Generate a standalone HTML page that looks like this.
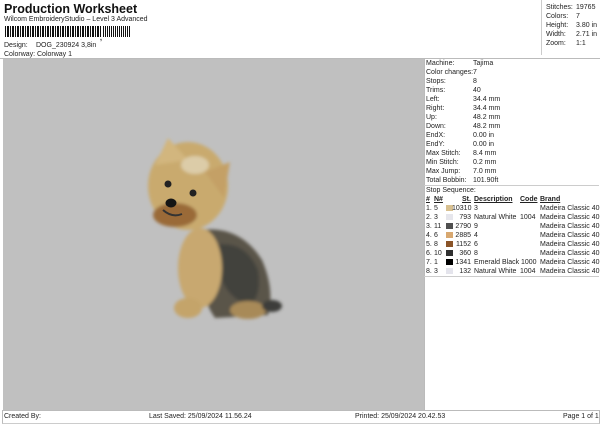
<!DOCTYPE html>
<html><head><style>
*{margin:0;padding:0}
body{width:600px;height:424px;background:#fff;position:relative;overflow:hidden;font-family:"Liberation Sans",sans-serif;font-size:7px;color:#222}
.a{position:absolute;white-space:nowrap;line-height:9px}
.sw{position:absolute;width:7px;height:6px}
</style></head><body>
<div class="a" style="left:4px;top:2px;font-size:12.5px;font-weight:bold;line-height:14px;color:#111">Production Worksheet</div>
<div class="a" style="left:4px;top:15px">Wilcom EmbroideryStudio – Level 3 Advanced</div>
<div class="a" style="left:5px;top:26px;width:96px;height:11px;background:repeating-linear-gradient(90deg,#111 0 1px,#fff 1px 2px,#111 2px 4px,#fff 4px 5px)"></div>
<div class="a" style="left:100px;top:34px;font-weight:bold">,</div>
<div class="a" style="left:103px;top:26px;width:27px;height:11px;background:repeating-linear-gradient(90deg,#111 0 1px,#fff 1px 2px,#111 2px 3px,#fff 3px 4px)"></div>
<div class="a" style="left:4px;top:41px">Design:</div><div class="a" style="left:36px;top:41px">DOG_230924 3,8in</div>
<div class="a" style="left:4px;top:50px">Colorway:</div><div class="a" style="left:37px;top:50px">Colorway 1</div>

<div style="position:absolute;left:541px;top:0;width:59px;height:55px;border-left:1px solid #ccc"></div>
<div class="a" style="left:546px;top:3px">Stitches:</div><div class="a" style="left:576px;top:3px">19765</div>
<div class="a" style="left:546px;top:12px">Colors:</div><div class="a" style="left:576px;top:12px">7</div>
<div class="a" style="left:546px;top:21px">Height:</div><div class="a" style="left:576px;top:21px">3.80 in</div>
<div class="a" style="left:546px;top:30px">Width:</div><div class="a" style="left:576px;top:30px">2.71 in</div>
<div class="a" style="left:546px;top:39px">Zoom:</div><div class="a" style="left:576px;top:39px">1:1</div>

<div style="position:absolute;left:0;top:58px;width:600px;border-top:1px solid #bbb"></div>
<div style="position:absolute;left:3px;top:59px;width:421px;height:351px;background:#c0c0c0"></div>
<div style="position:absolute;left:424px;top:59px;width:175px;height:351px;border-left:1px solid #bbb;border-right:1px solid #ccc"></div>
<div style="position:absolute;left:424px;top:185px;width:175px;border-top:1px solid #ccc"></div>
<div style="position:absolute;left:424px;top:276px;width:175px;border-top:1px solid #ccc"></div>

<svg style="position:absolute;left:0;top:0" width="424" height="410">
<defs><filter id="f"><feGaussianBlur stdDeviation="1.5"/></filter></defs>
<g filter="url(#f)">
<path d="M200 230 Q240 225 262 260 Q275 290 268 315 L215 318 Q195 290 200 230Z" fill="#5a5448"/>
<path d="M215 245 Q245 240 258 270 Q262 295 250 305 Q230 300 222 280Z" fill="#42423c"/>
<ellipse cx="188" cy="186" rx="40" ry="44" fill="#c9aa6e"/>
<path d="M155 165 L168 138 L188 160Z" fill="#d2b67e"/>
<path d="M205 172 L230 162 L224 198Z" fill="#c4a066"/>
<ellipse cx="175" cy="215" rx="22" ry="12" fill="#9a6a38"/>
<ellipse cx="200" cy="268" rx="22" ry="40" fill="#c8a870"/>
<ellipse cx="188" cy="308" rx="14" ry="10" fill="#c4a46a"/>
<ellipse cx="248" cy="310" rx="18" ry="9" fill="#a88a58"/>
<ellipse cx="272" cy="306" rx="10" ry="6" fill="#3e3e3a"/>
<ellipse cx="195" cy="165" rx="14" ry="9" fill="#dccca8"/>
</g>
<circle cx="168" cy="184" r="3.5" fill="#222"/>
<circle cx="193" cy="193" r="3.5" fill="#222"/>
<ellipse cx="171" cy="203" rx="5.5" ry="4.5" fill="#151515"/>
<path d="M163 210 Q172 218 182 214" stroke="#333" stroke-width="2" fill="none"/>
</svg>

<div class="a" style="left:426px;top:59px">Machine:</div><div class="a" style="left:473px;top:59px">Tajima</div>
<div class="a" style="left:426px;top:68px">Color changes:</div><div class="a" style="left:473px;top:68px">7</div>
<div class="a" style="left:426px;top:77px">Stops:</div><div class="a" style="left:473px;top:77px">8</div>
<div class="a" style="left:426px;top:86px">Trims:</div><div class="a" style="left:473px;top:86px">40</div>
<div class="a" style="left:426px;top:95px">Left:</div><div class="a" style="left:473px;top:95px">34.4 mm</div>
<div class="a" style="left:426px;top:104px">Right:</div><div class="a" style="left:473px;top:104px">34.4 mm</div>
<div class="a" style="left:426px;top:113px">Up:</div><div class="a" style="left:473px;top:113px">48.2 mm</div>
<div class="a" style="left:426px;top:122px">Down:</div><div class="a" style="left:473px;top:122px">48.2 mm</div>
<div class="a" style="left:426px;top:131px">EndX:</div><div class="a" style="left:473px;top:131px">0.00 in</div>
<div class="a" style="left:426px;top:140px">EndY:</div><div class="a" style="left:473px;top:140px">0.00 in</div>
<div class="a" style="left:426px;top:149px">Max Stitch:</div><div class="a" style="left:473px;top:149px">8.4 mm</div>
<div class="a" style="left:426px;top:158px">Min Stitch:</div><div class="a" style="left:473px;top:158px">0.2 mm</div>
<div class="a" style="left:426px;top:167px">Max Jump:</div><div class="a" style="left:473px;top:167px">7.0 mm</div>
<div class="a" style="left:426px;top:176px">Total Bobbin:</div><div class="a" style="left:473px;top:176px">101.90ft</div>
<div class="a" style="left:426px;top:186px">Stop Sequence:</div>
<div class="a" style="left:426px;top:195px;font-weight:bold;text-decoration:underline">#</div>
<div class="a" style="left:434px;top:195px;font-weight:bold;text-decoration:underline">N#</div>
<div class="a" style="left:462px;top:195px;font-weight:bold;text-decoration:underline">St.</div>
<div class="a" style="left:474px;top:195px;font-weight:bold;text-decoration:underline">Description</div>
<div class="a" style="left:520px;top:195px;font-weight:bold;text-decoration:underline">Code</div>
<div class="a" style="left:540px;top:195px;font-weight:bold;text-decoration:underline">Brand</div>

<div style="position:absolute;left:0;top:204px">
<div class="a" style="left:426px;top:0">1.</div><div class="a" style="left:434px;top:0">5</div><div class="sw" style="left:446px;top:1px;background:#d8c090"></div><div class="a" style="left:452px;top:0;width:19px;text-align:right">10310</div><div class="a" style="left:474px;top:0">3</div><div class="a" style="left:540px;top:0">Madeira Classic 40</div>
<div class="a" style="left:426px;top:9px">2.</div><div class="a" style="left:434px;top:9px">3</div><div class="sw" style="left:446px;top:10px;background:#e6e6ec"></div><div class="a" style="left:452px;top:9px;width:19px;text-align:right">793</div><div class="a" style="left:474px;top:9px">Natural White</div><div class="a" style="left:520px;top:9px">1004</div><div class="a" style="left:540px;top:9px">Madeira Classic 40</div>
<div class="a" style="left:426px;top:18px">3.</div><div class="a" style="left:434px;top:18px">11</div><div class="sw" style="left:446px;top:19px;background:#505050"></div><div class="a" style="left:452px;top:18px;width:19px;text-align:right">2790</div><div class="a" style="left:474px;top:18px">9</div><div class="a" style="left:540px;top:18px">Madeira Classic 40</div>
<div class="a" style="left:426px;top:27px">4.</div><div class="a" style="left:434px;top:27px">6</div><div class="sw" style="left:446px;top:28px;background:#d8a870"></div><div class="a" style="left:452px;top:27px;width:19px;text-align:right">2885</div><div class="a" style="left:474px;top:27px">4</div><div class="a" style="left:540px;top:27px">Madeira Classic 40</div>
<div class="a" style="left:426px;top:36px">5.</div><div class="a" style="left:434px;top:36px">8</div><div class="sw" style="left:446px;top:37px;background:#8a5428"></div><div class="a" style="left:452px;top:36px;width:19px;text-align:right">1152</div><div class="a" style="left:474px;top:36px">6</div><div class="a" style="left:540px;top:36px">Madeira Classic 40</div>
<div class="a" style="left:426px;top:45px">6.</div><div class="a" style="left:434px;top:45px">10</div><div class="sw" style="left:446px;top:46px;background:#303030"></div><div class="a" style="left:452px;top:45px;width:19px;text-align:right">360</div><div class="a" style="left:474px;top:45px">8</div><div class="a" style="left:540px;top:45px">Madeira Classic 40</div>
<div class="a" style="left:426px;top:54px">7.</div><div class="a" style="left:434px;top:54px">1</div><div class="sw" style="left:446px;top:55px;background:#000"></div><div class="a" style="left:452px;top:54px;width:19px;text-align:right">1341</div><div class="a" style="left:474px;top:54px">Emerald Black</div><div class="a" style="left:521px;top:54px">1000</div><div class="a" style="left:540px;top:54px">Madeira Classic 40</div>
<div class="a" style="left:426px;top:63px">8.</div><div class="a" style="left:434px;top:63px">3</div><div class="sw" style="left:446px;top:64px;background:#e4e4ec"></div><div class="a" style="left:452px;top:63px;width:19px;text-align:right">132</div><div class="a" style="left:474px;top:63px">Natural White</div><div class="a" style="left:520px;top:63px">1004</div><div class="a" style="left:540px;top:63px">Madeira Classic 40</div>
</div>

<div style="position:absolute;left:2px;top:410px;width:596px;height:12px;border:1px solid #bbb;border-bottom-color:#ccc"></div>
<div class="a" style="left:4px;top:412px">Created By:</div>
<div class="a" style="left:149px;top:412px">Last Saved: 25/09/2024 11.56.24</div>
<div class="a" style="left:355px;top:412px">Printed: 25/09/2024 20.42.53</div>
<div class="a" style="left:563px;top:412px">Page 1 of 1</div>
</body></html>
